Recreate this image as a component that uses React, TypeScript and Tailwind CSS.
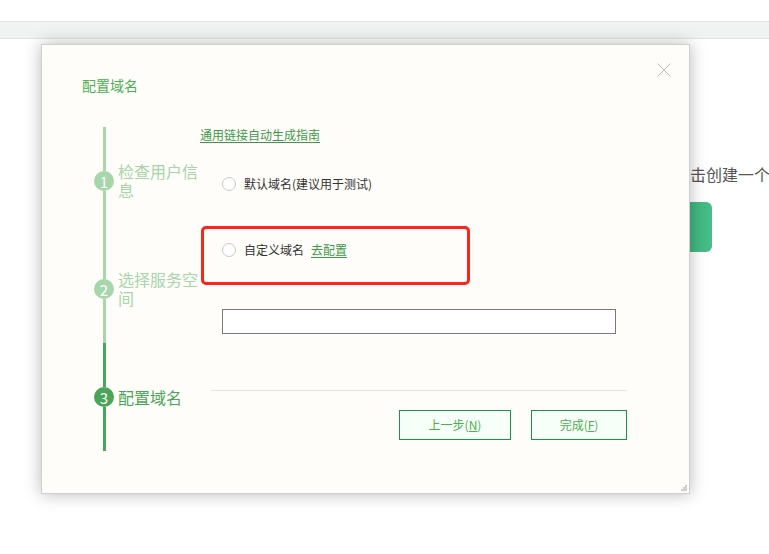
import React from "react";

const font = { fontFamily: '"Microsoft YaHei", "Noto Sans CJK SC", "Noto Sans", sans-serif' };

function Step({ n, label, active, lineTop, lineBottom }: { n: number; label: string; active: boolean; lineTop: string; lineBottom: string }) {
  return (
    <div className="flex h-[108px] items-stretch">
      <div className="flex w-[20px] flex-col items-center">
        <div className={`w-[3px] flex-1 ${lineTop}`} />
        <div
          className={`flex h-[20px] w-[20px] items-center justify-center rounded-full text-[15px] leading-none text-white ${active ? "bg-[#4aa558]" : "bg-[#a6d6a9]"}`}
        >
          {n}
        </div>
        <div className={`w-[3px] flex-1 ${lineBottom}`} />
      </div>
      <div className="ml-[4px] flex w-[82px] items-center">
        <span className={`text-[16px] leading-[19px] ${active ? "text-[#4aa558]" : "text-[#a6d6a9]"}`}>{label}</span>
      </div>
    </div>
  );
}

function Radio() {
  return <span className="inline-block h-[14px] w-[14px] rounded-full border border-[#c9c9c9] bg-white" />;
}

export default function App() {
  return (
    <div className="relative h-[554px] w-[769px] overflow-hidden bg-white" style={font}>
      {/* background page */}
      <div className="mt-[21px] h-[18px] border-y border-[#e2e3e3] bg-[#f1f2f2]" />
      <div className="ml-[674px] mt-[123px] whitespace-nowrap text-[16px] leading-[24px] text-[#555]">点击创建一个</div>
      <div className="ml-[640px] mt-[16px] h-[50px] w-[72px] rounded-[6px] bg-gradient-to-r from-[#36a775] to-[#47bd88]" />

      {/* dialog */}
      <div className="absolute left-[41px] top-[44px] h-[450px] w-[649px] border border-[#cfcfcf] bg-[#fefdf9] pl-[40px] pt-[30px] shadow-[0_0_16px_rgba(0,0,0,0.28)]">
        <div className="text-[14px] leading-[20px] text-[#4caf50]">配置域名</div>
        <svg className="absolute right-[18px] top-[18px]" width="14" height="14" viewBox="0 0 14 14">
          <path d="M0.5 0.5 L13.5 13.5 M13.5 0.5 L0.5 13.5" stroke="#bdbdbd" strokeWidth="1" fill="none" />
        </svg>

        <div className="mt-[32px] flex">
          <div className="ml-[12px] flex flex-col">
            <Step n={1} label="检查用户信息" active={false} lineTop="bg-[#a6d6a9]" lineBottom="bg-[#a6d6a9]" />
            <Step n={2} label="选择服务空间" active={false} lineTop="bg-[#a6d6a9]" lineBottom="bg-[#a6d6a9]" />
            <Step n={3} label="配置域名" active={true} lineTop="bg-[#4aa558]" lineBottom="bg-[#4aa558]" />
          </div>

          <div className="flex w-[427px] flex-col">
            <div className="h-[16px] text-[12px] leading-[16px]">
              <span className="text-[#3c9a48] underline underline-offset-2">通用链接自动生成指南</span>
            </div>
            <div className="ml-[22px] mt-[33px] flex h-[16px] items-center gap-[8px] text-[12px] text-[#333]">
              <Radio />
              <span>默认域名(建议用于测试)</span>
            </div>
            <div className="ml-[1px] mt-[34px] h-[59px] w-[269px] rounded-[5px] border-[3px] border-[#ff2418] pl-[18px] pt-[13px]">
              <div className="flex h-[16px] items-center text-[12px] text-[#333]">
                <Radio />
                <span className="ml-[8px]">自定义域名</span>
                <span className="ml-[7px] text-[#3c9a48] underline underline-offset-2">去配置</span>
              </div>
            </div>
            <div className="ml-[22px] mt-[24px] h-[25px] w-[394px] border border-[#7a7a7a] bg-white" />
            <div className="ml-[11px] mt-[56px] h-px w-[416px] bg-[#e4e4e4]" />
            <div className="mt-[19px] flex justify-end gap-[20px]">
              <button className="h-[30px] w-[112px] border border-[#139a48] bg-[#f7fff9] text-[12px] text-[#4caf50]">上一步(<span className="underline">N</span>)</button>
              <button className="h-[30px] w-[96px] border border-[#139a48] bg-[#f7fff9] text-[12px] text-[#4caf50]">完成(<span className="underline">F</span>)</button>
            </div>
          </div>
        </div>

        {/* resize grip */}
        <svg className="absolute bottom-[2px] right-[2px]" width="6" height="6" viewBox="0 0 6 6">
          <rect x="4" y="0" width="2" height="2" fill="#d0d0d0" />
          <rect x="2" y="2" width="2" height="2" fill="#d0d0d0" />
          <rect x="4" y="2" width="2" height="2" fill="#d0d0d0" />
          <rect x="0" y="4" width="2" height="2" fill="#d0d0d0" />
          <rect x="2" y="4" width="2" height="2" fill="#d0d0d0" />
          <rect x="4" y="4" width="2" height="2" fill="#d0d0d0" />
        </svg>
      </div>
    </div>
  );
}
